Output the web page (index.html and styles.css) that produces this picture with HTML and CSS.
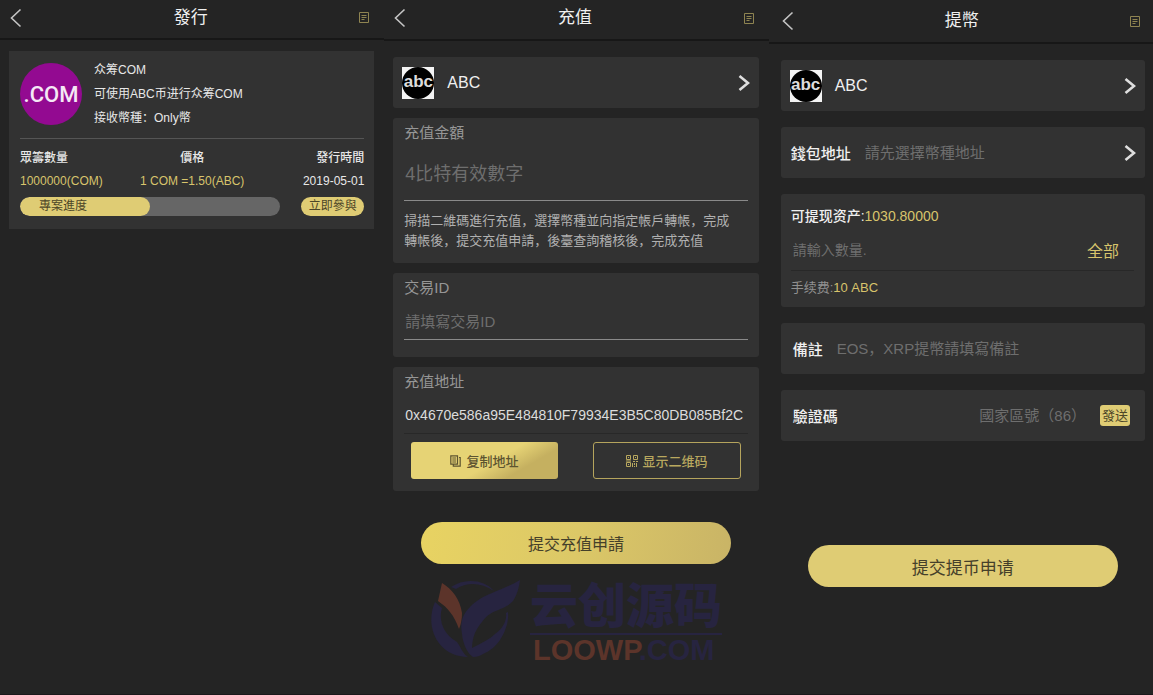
FILE: index.html
```html
<!DOCTYPE html>
<html lang="zh-CN">
<head>
<meta charset="utf-8">
<meta name="viewport" content="width=device-width, initial-scale=1">
<title>發行 · 充值 · 提幣</title>
<link rel="stylesheet" href="styles.css">
</head>
<body>
<svg class="defs" width="0" height="0" aria-hidden="true">
  <symbol id="back" viewBox="0 0 12 20"><path d="M10.500 1.500 1.500 10l9 8.500" fill="none" stroke="#c4c4c4" stroke-width="1.600"/></symbol>
  <symbol id="note" viewBox="0 0 10 11"><path d="M.5.500h9v10h-9zM2.500 3.500h5M2.500 5.500h5M2.500 7.500h3" fill="none" stroke="#8f8451"/></symbol>
  <symbol id="next" viewBox="0 0 12 18"><path d="M1.500 2 10 9l-8.500 7" fill="none" stroke="#dedede" stroke-width="2.600"/></symbol>
</svg>
<div class="screens">

  <main class="screen issue">
    <header class="bar">
      <button class="icon-btn" aria-label="返回"><svg width="12" height="20"><use href="#back"/></svg></button>
      <h1>發行</h1>
      <button class="icon-btn" aria-label="記錄"><svg width="10" height="11"><use href="#note"/></svg></button>
    </header>
    <section class="project">
      <div class="intro">
        <div class="com-logo">.COM</div>
        <div class="lines">
          <p>众筹COM</p>
          <p>可使用ABC币进行众筹COM</p>
          <p>接收幣種：Only幣</p>
        </div>
      </div>
      <table class="facts">
        <thead><tr><th>眾籌數量</th><th>價格</th><th>發行時間</th></tr></thead>
        <tbody><tr><td class="gold">1000000(COM)</td><td class="gold">1 COM =1.50(ABC)</td><td>2019-05-01</td></tr></tbody>
      </table>
      <div class="join">
        <div class="track"><div class="fill" style="width:50%">專案進度</div></div>
        <button class="join-btn">立即參與</button>
      </div>
    </section>
  </main>

  <main class="screen deposit">
    <header class="bar">
      <button class="icon-btn" aria-label="返回"><svg width="12" height="20"><use href="#back"/></svg></button>
      <h1>充值</h1>
      <button class="icon-btn" aria-label="記錄"><svg width="10" height="11"><use href="#note"/></svg></button>
    </header>
    <div class="stack">
      <button class="card row coin">
        <span class="abc"><span class="abc-disc">abc</span></span>
        <span class="grow">ABC</span>
        <svg width="12" height="18"><use href="#next"/></svg>
      </button>
      <section class="card block amount">
        <label for="amount">充值金額</label>
        <input id="amount" class="line-input large" placeholder="4比特有效數字">
        <p class="hint">掃描二維碼進行充值，選擇幣種並向指定帳戶轉帳，完成<br>轉帳後，提交充值申請，後臺查詢稽核後，完成充值</p>
      </section>
      <section class="card block tx">
        <label for="txid">交易ID</label>
        <input id="txid" class="line-input" placeholder="請填寫交易ID">
      </section>
      <section class="card block addr">
        <label for="addr">充值地址</label>
        <input id="addr" class="line-input value" readonly value="0x4670e586a95E484810F79934E3B5C80DB085Bf2C">
        <div class="pair">
          <button class="copy">
            <svg width="11" height="12" viewBox="0 0 11 12" fill="none" stroke="currentColor" stroke-width="1.200"><path d="M.8.800h6.700v8.400H.8zM2.300 3h3.700M2.300 5h3.700M2.300 7h3.700M9 2.500h1.200v8.700H3.300V9.500"/></svg>
            复制地址
          </button>
          <button class="qr">
            <svg width="12" height="12" viewBox="0 0 12 12" fill="none" stroke="currentColor"><path d="M.5.500h4v4h-4zM7.500.500h4v4h-4zM.5 7.500h4v4h-4zM2 2.500h1M9 2.500h1M2 9.500h1M7 6.500h2M10 6.500h2M6.500 8v4M8.500 8v2M10.500 8v4M8 11.500h1M0 6h5"/></svg>
            显示二维码
          </button>
        </div>
      </section>
    </div>
    <button class="submit shaded">提交充值申請</button>
    <div class="mark">
      <svg width="92" height="80" viewBox="0 0 92 80">
        <path d="M12 4 8 22c10 7 16 14 21 28 2-5 3-10 3-16C30 20 22 10 12 4z" fill="#5c342a"/>
        <g fill="#272440">
          <path d="M5 23C-6 48 8 78 38 78 32 74 31 68 27 63 14 56 8 42 12 29z"/>
          <path d="M21 8C34-1 54 0 64 12 52 4 38 2 26 10z"/>
          <path d="M90 1C80 7 71 10 62 14 52 18 46 22 40 28 32 36 30 44 32 55c1 10 5 19 11 23 4 0 7-1 10-3 7-3 13-8 17-14 5-8 9-18 8-28l-2 1c1 9-4 16-11 21-5 5-12 8-17 11-2 1-4 2-6 3 0-7 2-14 5-19 4-6 8-12 13-15 4-3 9-4 13-6 4-2 7-4 10-7 4-6 6-13 7-21z"/>
        </g>
      </svg>
      <div class="mark-text">
        <div class="mark-cn">云创源码</div>
        <div class="mark-en"><span>LOOWP</span>.COM</div>
      </div>
    </div>
  </main>

  <main class="screen withdraw">
    <header class="bar">
      <button class="icon-btn" aria-label="返回"><svg width="12" height="20"><use href="#back"/></svg></button>
      <h1>提幣</h1>
      <button class="icon-btn" aria-label="記錄"><svg width="10" height="11"><use href="#note"/></svg></button>
    </header>
    <div class="stack">
      <button class="card row coin">
        <span class="abc"><span class="abc-disc">abc</span></span>
        <span class="grow">ABC</span>
        <svg width="12" height="18"><use href="#next"/></svg>
      </button>
      <section class="card row">
        <label for="wallet">錢包地址</label>
        <input id="wallet" class="grow" placeholder="請先選擇幣種地址">
        <button class="icon-btn" aria-label="選擇地址"><svg width="12" height="18"><use href="#next"/></svg></button>
      </section>
      <section class="card balance">
        <p class="asset">可提现资产:<span class="gold">1030.80000</span></p>
        <div class="qty">
          <input class="grow" aria-label="數量" placeholder="請輸入數量.">
          <button class="all">全部</button>
        </div>
        <p class="fee">手续费:<span class="gold">10 ABC</span></p>
      </section>
      <section class="card row inset">
        <label for="memo">備註</label>
        <input id="memo" class="grow" placeholder="EOS，XRP提幣請填寫備註">
      </section>
      <section class="card row inset">
        <label for="code">驗證碼</label>
        <input id="code" class="grow right" placeholder="國家區號（86）">
        <button class="send">發送</button>
      </section>
    </div>
    <button class="submit">提交提币申请</button>
  </main>

</div>
</body>
</html>
```
FILE: styles.css
```css
* { box-sizing: border-box; }
body {
  margin: 0;
  background: #242424;
  color: #e8e8e8;
  font-family: "Liberation Sans", "Noto Sans CJK SC", sans-serif;
  font-size: 14px;
}
h1, p { margin: 0; font-weight: 400; }
svg { display: block; flex: none; }
.defs { position: absolute; }
button, input {
  font: inherit;
  color: inherit;
  background: none;
  border: 0;
  padding: 0;
  margin: 0;
  min-width: 0;
}
button { cursor: pointer; white-space: nowrap; }
input { outline: 0; }
input::placeholder { color: #6e6e6e; opacity: 1; }
.gold { color: #d8c46c; }
.grow { flex: 1; text-align: left; }

.abc { width: 32px; height: 32px; background: #f4f4f4; }
.abc-disc {
  display: block;
  height: 32px;
  border-radius: 50%;
  background: #000;
  color: #dcdcdc;
  font-size: 17px;
  font-weight: 700;
  line-height: 29px;
  text-align: center;
}

.screens {
  display: grid;
  grid-template-columns: repeat(3, minmax(0, 1fr));
  min-height: 100vh;
  border-bottom: 1px solid #1b181b;
}
.screen { display: flex; flex-direction: column; padding: 0 10px 20px 9px; }
.withdraw { padding: 0 8px 20px 12px; }

.bar {
  display: flex;
  align-items: center;
  justify-content: space-between;
  height: 41px;
  margin: 0 -10px 0 -9px;
  padding: 0 15px 3px 10px;
  border-bottom: 2px solid #171717;
}
.issue .bar { height: 40px; }
.withdraw .bar { height: 44px; margin: 0 -8px 0 -12px; padding: 3px 13px 3px 13px; }
.bar h1 { font-size: 17px; line-height: 24px; color: #f0f0f0; }

.project { margin-top: 11px; padding: 7px 10px 13px 11px; background: #323232; font-size: 12px; }
.intro { display: flex; align-items: center; gap: 12px; padding-bottom: 8px; border-bottom: 1px solid #555; }
.com-logo {
  width: 62px;
  height: 62px;
  border-radius: 50%;
  background: #930a91;
  color: #f5e8f5;
  font: 500 22px/64px Roboto, sans-serif;
  text-align: center;
}
.lines p { line-height: 24px; }
.facts { width: 100%; table-layout: fixed; border-collapse: collapse; margin: 8px 0 4px; }
.facts th, .facts td { padding: 0; line-height: 23px; text-align: center; white-space: nowrap; }
.facts th { font-weight: 500; }
.facts th:first-child, .facts td:first-child { text-align: left; }
.facts th:last-child, .facts td:last-child { text-align: right; }
.join { display: flex; gap: 21px; }
.track { flex: 1; height: 19px; border-radius: 10px; background: #666; overflow: hidden; }
.fill { height: 19px; padding-left: 19px; border-radius: 10px; background: #dfcc74; color: #4d4628; line-height: 19px; }
.join-btn { width: 63px; height: 19px; border-radius: 10px; background: #dfcc74; color: #4d4628; line-height: 19px; }

.stack { display: flex; flex-direction: column; gap: 10px; margin-top: 16px; }
.withdraw .stack { gap: 16px; }
.card { background: #323232; border-radius: 3px; }
.row { display: flex; align-items: center; height: 51px; padding: 0 9px 0 10px; gap: 14px; font-size: 15px; }
.coin { font-size: 16px; padding: 0 9px; gap: 13px; color: #f0f0f0; }
.row label { font-weight: 500; color: #f0f0f0; }
.inset { padding: 0 15px 0 12px; }
.right { text-align: right; }

.block { display: flex; flex-direction: column; padding: 5px 11px 12px; }
.block label { font-size: 15px; line-height: 20px; color: #969696; }
.line-input { height: 37px; margin-top: 5px; padding: 0 1px; border-bottom: 1px solid #8a8a8a; font-size: 15px; }
.large { height: 53px; font-size: 18px; }
.tx { padding-bottom: 17px; }
.value { font-size: 14px; border-color: #282828; color: #dcdcdc; }
.hint { margin-top: 10px; font-size: 13px; line-height: 20px; color: #b0b0b0; white-space: nowrap; }
.pair { display: flex; justify-content: space-between; gap: 35px; margin-top: 8px; padding: 0 7px; }
.pair button {
  flex: 1 1 0;
  display: flex;
  align-items: center;
  justify-content: center;
  gap: 5px;
  height: 37px;
  border-radius: 3px;
  font-size: 13px;
  font-weight: 500;
}
.pair .copy { background: linear-gradient(150deg, #e6d375 55%, #c5b060 75%); color: #5d5430; }
.pair .qr { border: 1px solid #b5a45d; color: #b9a85f; }

.submit {
  align-self: center;
  width: 85%;
  height: 42px;
  margin-top: 104px;
  border-radius: 21px;
  background: #dfcc74;
  color: #45402a;
  font-size: 17px;
}
.shaded { margin-top: 31px; background: linear-gradient(100deg, #e8d362, #dcc867 50%, #c9b466); font-size: 16px; }

.mark { display: flex; align-self: center; gap: 8px; margin-top: 15px; color: #272440; }
.mark-cn { padding-bottom: 8px; border-bottom: 2px solid #272440; font: 900 48px/46px "Noto Sans CJK SC", sans-serif; }
.mark-en { font-size: 29px; font-weight: 700; line-height: 30px; padding-left: 3px; }
.mark-en span { color: #5c342a; }

.balance { padding: 12px 11px 9px 10px; }
.balance p { line-height: 20px; }
.asset { font-size: 14px; font-weight: 500; color: #f0f0f0; }
.asset .gold { font-weight: 400; }
.qty { display: flex; height: 45px; padding: 4px 15px 0 2px; border-bottom: 1px solid #282828; }
.all { font-size: 16px; color: #d8c46c; }
.fee { margin-top: 7px; font-size: 13px; color: #909090; }
.send { width: 30px; height: 21px; border-radius: 3px; background: #dfcc74; color: #4d4628; font-size: 13px; line-height: 21px; }
```
